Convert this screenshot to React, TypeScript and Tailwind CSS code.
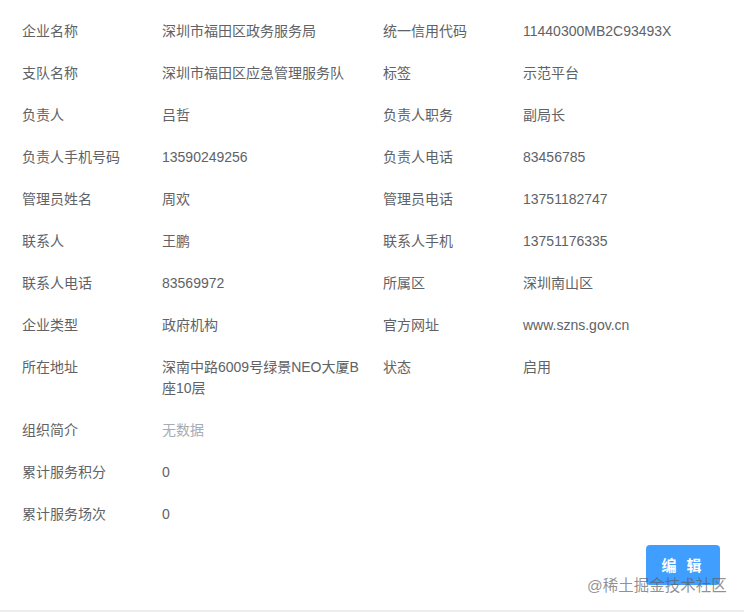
import React from "react";

type Item = { label: string; value: string; muted?: boolean; wide?: boolean };

const items: Item[] = [
  { label: "企业名称", value: "深圳市福田区政务服务局" },
  { label: "统一信用代码", value: "11440300MB2C93493X" },
  { label: "支队名称", value: "深圳市福田区应急管理服务队" },
  { label: "标签", value: "示范平台" },
  { label: "负责人", value: "吕哲" },
  { label: "负责人职务", value: "副局长" },
  { label: "负责人手机号码", value: "13590249256" },
  { label: "负责人电话", value: "83456785" },
  { label: "管理员姓名", value: "周欢" },
  { label: "管理员电话", value: "13751182747" },
  { label: "联系人", value: "王鹏" },
  { label: "联系人手机", value: "13751176335" },
  { label: "联系人电话", value: "83569972" },
  { label: "所属区", value: "深圳南山区" },
  { label: "企业类型", value: "政府机构" },
  { label: "官方网址", value: "www.szns.gov.cn" },
  { label: "所在地址", value: "深南中路6009号绿景NEO大厦B座10层" },
  { label: "状态", value: "启用" },
  { label: "组织简介", value: "无数据", muted: true, wide: true },
  { label: "累计服务积分", value: "0", wide: true },
  { label: "累计服务场次", value: "0", wide: true },
];

function Field({ label, value, muted, wide }: Item) {
  return (
    <div className={wide ? "col-span-2 flex" : "flex"}>
      <div className="w-[140px] shrink-0">{label}</div>
      <div className={`w-[205px] break-words ${muted ? "text-[#a8abb2]" : ""}`}>{value}</div>
    </div>
  );
}

export default function App() {
  return (
    <div
      className="min-h-screen bg-[#ededed] text-[14px] leading-[21px] text-[#606266]"
      style={{ fontFamily: '"Liberation Sans", "Noto Sans CJK SC", sans-serif' }}
    >
      <div className="relative h-[610px] bg-white">
        {/* 详情 */}
        <div className="grid grid-cols-[361px_1fr] gap-y-[21px] pl-[22px] pt-[21px]">
          {items.map((it) => (
            <Field key={it.label} {...it} />
          ))}
        </div>

        {/* 操作 */}
        <div className="mt-[20px] flex justify-end pr-[24px]">
          <button className="h-[40px] w-[74px] rounded-[4px] bg-[#409eff] text-[15px] font-semibold tracking-[3px] text-white">
            编 辑
          </button>
        </div>

        {/* 水印 */}
        <div className="pointer-events-none absolute left-[587px] top-[575px] text-[15.5px] leading-[22px] text-[#5f5f5f]/70">
          @稀土掘金技术社区
        </div>
      </div>
    </div>
  );
}
